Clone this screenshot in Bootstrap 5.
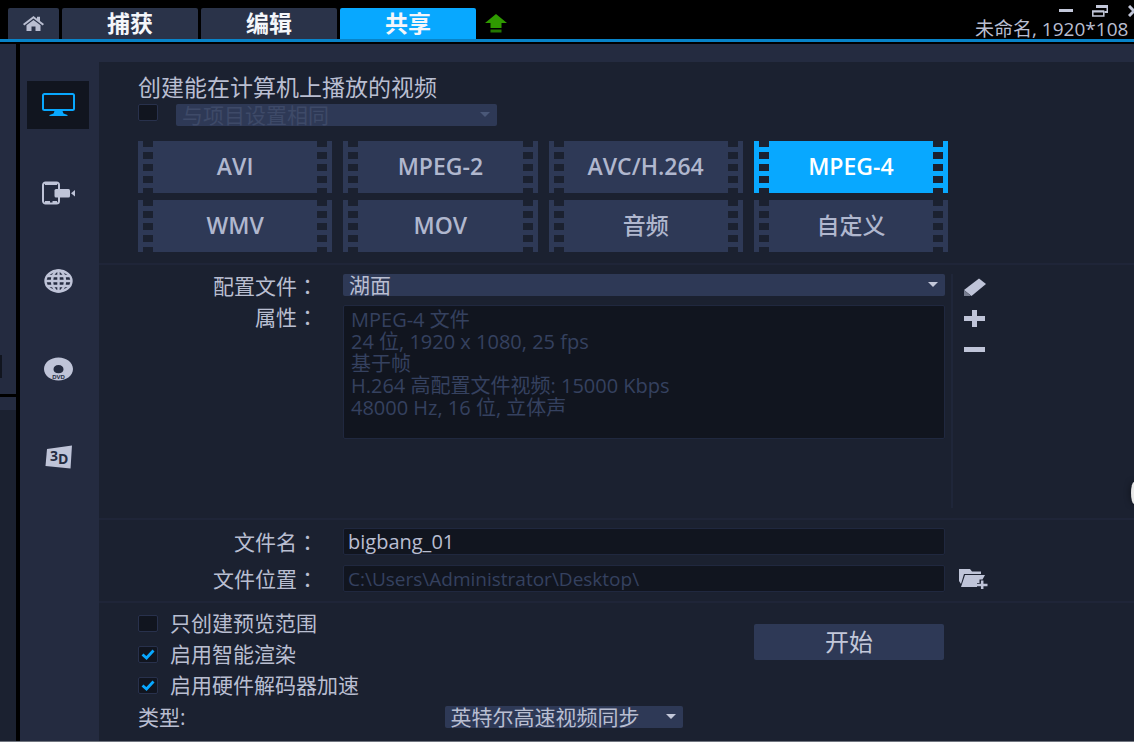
<!DOCTYPE html>
<html lang="zh-CN">
<head>
<meta charset="utf-8">
<meta name="viewport" content="width=device-width, initial-scale=1">
<title>共享</title>
<link href="https://cdn.jsdelivr.net/npm/bootstrap@5.3.0/dist/css/bootstrap.min.css" rel="stylesheet">
<style>
:root{--panel:#1b2130;--rail:#242b40;--ctl:#2e3956;--well:#11151f;--edge:#20283f;--ink:#b9bed1;--dim:#35415f;--accent:#08a8ff}
body{font-family:"Open Sans","Noto Sans CJK SC",sans-serif;font-size:21px;line-height:22px;color:var(--ink);background:#fff;min-height:100vh;padding-bottom:14px;overflow-x:hidden}
button,select,input,textarea{font-family:inherit}
svg{display:block}
.topbar{background:#000;height:44px}
.tabs{height:42px;padding:8px 0 0 8px;border-bottom:3px solid #0883c8;gap:3px}
.tab{border:0;border-radius:2px 2px 0 0;background:#2a3349;color:#f4f6fa;font-weight:700;font-size:23px;line-height:31px;height:31px;width:136px;padding:0}
.tab.home{width:51px;color:#b9bed1}
.tab.on{background:var(--accent)}
.uparrow{border:0;background:none;padding:6px 0 0 6px}
.wincol{width:159px;white-space:nowrap;margin-top:-8px;font-size:19px}
.winbtns{height:18px;padding:3px 0 0 84px;gap:19px}
.winbtns button,.plain{border:0;padding:0;background:none;color:inherit}
.app{background:#000;border-bottom:1px solid #70757f}
.edgecol{width:16px;gap:3px;margin-right:4px}
.edge-top{flex:350 1 0;background:var(--rail)}
.edge-top i{display:block;width:2px;height:23px;margin-top:311px;background:var(--well)}
.edge-bot{flex:344 1 0;background:linear-gradient(var(--rail) 13px,var(--panel) 13px)}
.rail{width:79px;background:var(--rail);padding:37px 10px 0 7px;gap:40px}
.rail button{height:48px;border:0;padding:0;background:none;display:flex;align-items:center;justify-content:center;color:#bfc4d8}
.rail button.on{background:var(--well);color:var(--accent)}
.main{background:var(--panel);border-top:18px solid var(--rail);min-width:0}
.sec{padding-left:39px;border-bottom:2px solid #1f2538}
.s1{padding-top:10px;padding-bottom:11px;padding-right:186px}
.ttl{font-size:23px;line-height:30px;font-weight:400;margin:0 0 2px}
.drop{appearance:none;border:0;border-radius:2px;height:22px;line-height:22px;font-size:21px;color:var(--ink);padding:0 24px 0 6px;background:var(--ctl) url("data:image/svg+xml,%3Csvg xmlns='http://www.w3.org/2000/svg' width='10' height='6'%3E%3Cpath d='M0 0h10L5 5z' fill='%23c3c8da'/%3E%3C/svg%3E") no-repeat right 7px center}
.drop:disabled{opacity:1;color:#3e4a68;background-image:url("data:image/svg+xml,%3Csvg xmlns='http://www.w3.org/2000/svg' width='10' height='6'%3E%3Cpath d='M0 0h10L5 5z' fill='%234a5878'/%3E%3C/svg%3E")}
.preset{width:321px;margin-left:18px}
.tick{appearance:none;width:20px;height:17px;margin:0;border:1px solid #28314c;border-radius:2px;background:var(--well) no-repeat center;flex:none}
.tick:checked{background-image:url("data:image/svg+xml,%3Csvg xmlns='http://www.w3.org/2000/svg' width='14' height='11'%3E%3Cpath d='M1.500 5.500l4 3.500L12.500 1.500' fill='none' stroke='%2308a8ff' stroke-width='2.800'/%3E%3C/svg%3E")}
.films{display:grid;grid-template-columns:repeat(4,minmax(0,1fr));gap:7px 11px;margin-top:15px}
.film{border:0;height:52px;color:#b0b7ce;font-weight:600;font-size:23px;line-height:50px;padding:0 0 2px;
background-color:var(--ctl);background-image:linear-gradient(var(--panel) 7px,transparent 7px),linear-gradient(var(--panel) 7px,transparent 7px);background-size:10px 12px;background-repeat:repeat-y;background-position:left 5px top -1px,right 5px top -1px}
.film.han{font-weight:500}
.film.on{background-color:var(--accent);color:#fff}
.rowgrid{display:grid;grid-template-columns:180px minmax(0,1fr) 183px}
.lab{text-align:right;font-family:"Noto Sans CJK TC",sans-serif}
.lab span{font-family:"Open Sans","Noto Sans CJK SC",sans-serif}
.fld{margin:0 6px 0 25px}
.s2{padding-top:9px;padding-bottom:10px}
.well{border:1px solid var(--edge);border-radius:2px;background:var(--well);color:var(--ink)}
.info{display:block;width:100%;height:134px;padding:3px 7px;font-size:20px;line-height:22px;color:var(--dim);resize:none;overflow:hidden;margin-top:9px}
.tools{border-left:2px solid #1f2639;height:234px;padding:2px 0 0 10px;gap:8px}
.tools button{height:23px;width:24px;color:#bfc4d8}
.s3{padding-top:8px;padding-bottom:9px;gap:10px}
.line{display:block;width:100%;height:27px;padding:0 4px;font-size:20px;line-height:25px}
.line[readonly]{color:var(--dim);font-size:19px}
.s4{padding:9px 190px 12px 39px}
.opts{gap:9px}
.opt{height:22px;gap:12px}
.go{border:0;border-radius:2px;background:var(--ctl);color:#c3c8da;width:190px;height:36px;font-size:24px;line-height:36px;padding:0;margin-top:12px}
.kindrow{margin-top:10px}
.typ{width:238px;margin-left:259px}
.knob{position:absolute;right:0;top:438px;width:3px;height:22px;border-radius:3px 0 0 3px/11px 0 0 11px;background:#e8e8e8;box-shadow:0 0 6px #000a}
</style>
</head>
<body class="d-flex flex-column">
<header class="topbar flex-shrink-0">
 <div class="tabs d-flex">
  <button class="tab home d-flex align-items-center justify-content-center" aria-label="主页"><svg width="21" height="15" viewBox="0 0 21 15" fill="currentColor"><path d="M0 8 10.500 0 14 2.700V.8h3v4.200L21 8l-1.300 1.400L10.500 2.500 1.300 9.400z"/><path d="M3.500 9.200 10.500 4l7 5.200V15h-5v-4.500h-4V15h-5z"/></svg></button>
  <button class="tab">捕获</button>
  <button class="tab">编辑</button>
  <button class="tab on">共享</button>
  <button class="uparrow d-flex align-items-start" aria-label="上传"><svg width="22" height="19" viewBox="0 0 22 19"><path d="M11 0 22 9h-5.500v5h-11V9H0z" fill="#2f9a00"/><path d="M5.500 15.500h11V18.500h-11z" fill="#247800"/></svg></button>
  <div class="wincol ms-auto">
   <div class="winbtns d-flex">
    <button aria-label="最小化"><svg width="14" height="12"><path d="M0 5.500h14" stroke="#c3c8da" stroke-width="3"/></svg></button>
    <button aria-label="还原"><svg width="16" height="12" fill="none" stroke="#c3c8da"><path d="M4 2h11.500v5h-3" stroke-width="2"/><path d="M4 1.500h12" stroke-width="3"/><path d="M.8 6.200h11v4.800H.8z" stroke-width="1.500"/><path d="M0 6.500h12" stroke-width="2"/></svg></button>
    <button class="ms-auto" aria-label="关闭"><svg width="6" height="12" fill="none" stroke="#c3c8da" stroke-width="3"><path d="M1 1l5 5-5 5"/></svg></button>
   </div>
   <div>未命名, 1920*108</div>
  </div>
 </div>
</header>
<div class="app d-flex flex-grow-1 position-relative">
 <div class="edgecol d-flex flex-column flex-shrink-0"><div class="edge-top d-flex align-items-start"><i></i></div><div class="edge-bot"></div></div>
 <nav class="rail d-flex flex-column flex-shrink-0">
  <button class="on" aria-label="计算机"><svg width="33" height="24" viewBox="0 0 33 24" fill="none"><rect x="1" y="1" width="31" height="16" rx="1.500" stroke="currentColor" stroke-width="2"/><path d="M12.500 18h8l1 2.500 4 1.500v1h-18v-1l4-1.500z" fill="currentColor"/></svg></button>
  <button aria-label="设备"><svg width="33" height="24" viewBox="0 0 33 24"><path d="M17 8V4a2.500 2.500 0 0 0-2.500-2.500h-11A2.500 2.500 0 0 0 1 4v16a2.500 2.500 0 0 0 2.500 2.500h11A2.500 2.500 0 0 0 17 20v-4" fill="none" stroke="currentColor" stroke-width="2"/><path d="M3 1h12v3H3zM3 20h5v3H3zM10.500 20H15v3h-4.500z" fill="currentColor"/><rect x="12.500" y="8" width="15.500" height="8.500" rx="1.500" fill="currentColor"/><path d="M29 12.200l4-3.200v6.500z" fill="currentColor"/></svg></button>
  <button aria-label="网络"><svg width="29" height="24" viewBox="0 0 29 24" fill="none" stroke="currentColor" stroke-width="2.400"><ellipse cx="14.500" cy="12" rx="13" ry="10.500"/><ellipse cx="14.500" cy="12" rx="6.500" ry="10.500"/><path d="M14.500 1v22M1 12h27M4 7h21M4 17h21"/></svg></button>
  <button aria-label="光盘"><svg width="29" height="24" viewBox="0 0 29 24"><path fill="currentColor" fill-rule="evenodd" d="M14.500.5C22.500.5 29 5.600 29 12s-6.500 11.500-14.500 11.500S0 18.400 0 12 6.500.5 14.500.5zm0 7.500c-3 0-5 1.800-5 4.200s2 4.100 5 4.100 5-1.700 5-4.100-2-4.200-5-4.200z"/><text x="14.500" y="22" text-anchor="middle" font-size="6" font-weight="700" font-family="Liberation Sans" fill="#242b40">DVD</text></svg></button>
  <button aria-label="3D"><svg width="27" height="24" viewBox="0 0 27 24"><path d="M2 4 27 .5 25.500 23.500.5 21z" fill="currentColor"/><text x="5" y="16" font-size="14" font-weight="700" font-family="Open Sans" fill="#242b40">3</text><text x="13" y="19" font-size="14" font-weight="700" font-family="Open Sans" fill="#242b40">D</text></svg></button>
 </nav>
 <main class="main flex-grow-1">
  <section class="sec s1">
   <h1 class="ttl">创建能在计算机上播放的视频</h1>
   <div class="d-flex align-items-start">
    <input class="tick" type="checkbox" id="same" aria-label="与项目设置相同">
    <select class="drop preset" disabled aria-label="项目设置"><option>与项目设置相同</option></select>
   </div>
   <div class="films">
    <button class="film">AVI</button><button class="film">MPEG-2</button><button class="film">AVC/H.264</button><button class="film on">MPEG-4</button>
    <button class="film">WMV</button><button class="film">MOV</button><button class="film han">音频</button><button class="film han">自定义</button>
   </div>
  </section>
  <section class="sec s2 rowgrid">
   <div class="lab d-flex flex-column" lang="zh-TW"><label for="prof"><span lang="zh-CN">配置文件</span>：</label><label for="info" class="mt-2"><span lang="zh-CN">属性</span>：</label></div>
   <div class="fld">
    <select class="drop d-block w-100" id="prof"><option>湖面</option></select>
    <textarea class="well info" id="info" readonly>MPEG-4 文件
24 位, 1920 x 1080, 25 fps
基于帧
H.264 高配置文件视频: 15000 Kbps
48000 Hz, 16 位, 立体声</textarea>
   </div>
   <div class="tools d-flex flex-column">
    <button class="plain" aria-label="编辑配置"><svg width="24" height="19" viewBox="0 0 24 19"><path d="M16 0.500 23 6 8.500 18 1 12z" fill="currentColor"/><path d="M1 12v6h7z" fill="#777d90"/></svg></button>
    <button class="plain" aria-label="添加"><svg width="23" height="19" viewBox="0 0 23 19"><path d="M1 9.500h21M11.500 1v17" stroke="currentColor" stroke-width="5"/></svg></button>
    <button class="plain" aria-label="删除"><svg width="23" height="19" viewBox="0 0 23 19"><path d="M1 9.500h21" stroke="currentColor" stroke-width="5"/></svg></button>
   </div>
  </section>
  <section class="sec s3 d-flex flex-column">
   <div class="rowgrid align-items-center"><label class="lab" for="fname" lang="zh-TW"><span lang="zh-CN">文件名</span>：</label><div class="fld"><input class="well line" id="fname" value="bigbang_01"></div></div>
   <div class="rowgrid align-items-center"><label class="lab" for="floc" lang="zh-TW"><span lang="zh-CN">文件位置</span>：</label><div class="fld"><input class="well line" id="floc" readonly value="C:\Users\Administrator\Desktop\"></div>
    <button class="plain ps-2" aria-label="浏览"><svg width="29" height="21" viewBox="0 0 29 21"><path d="M0 1h11l2 2.500h9V6H5L2 16 0 13z" fill="#bfc4d8"/><path d="M6 7h20l-2.500 4.500h-3V15H18v4H2z" fill="#bfc4d8"/><path d="M18 17h10.500M23.200 12.500V21" stroke="#bfc4d8" stroke-width="2.500"/></svg></button></div>
  </section>
  <section class="s4">
   <div class="d-flex justify-content-between align-items-start">
    <div class="opts d-flex flex-column">
     <label class="opt d-flex align-items-center"><input class="tick" type="checkbox">只创建预览范围</label>
     <label class="opt d-flex align-items-center"><input class="tick" type="checkbox" checked>启用智能渲染</label>
     <label class="opt d-flex align-items-center"><input class="tick" type="checkbox" checked>启用硬件解码器加速</label>
    </div>
    <button class="go">开始</button>
   </div>
   <div class="kindrow d-flex align-items-center"><label for="kind">类型:</label><select class="drop typ" id="kind"><option>英特尔高速视频同步</option></select></div>
  </section>
 </main>
 <div class="knob"></div>
</div>
<script src="https://cdn.jsdelivr.net/npm/bootstrap@5.3.0/dist/js/bootstrap.bundle.min.js"></script>
</body>
</html>
